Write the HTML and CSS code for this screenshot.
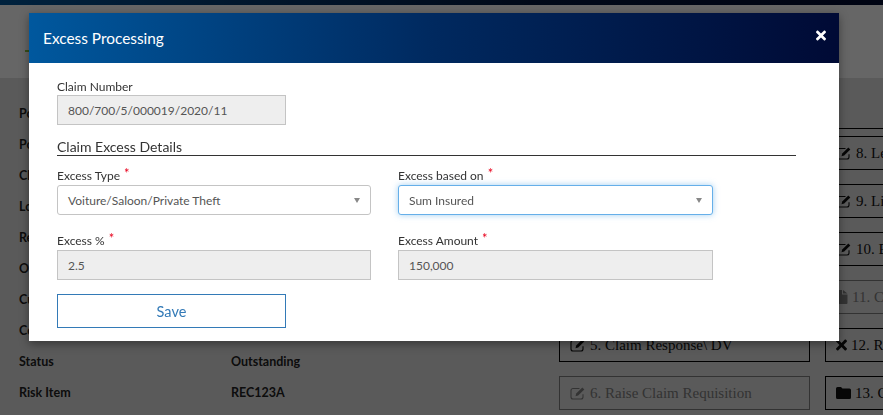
FILE: index.html
```html
<!DOCTYPE html>
<html lang="en">
<head>
<meta charset="utf-8">
<title>Excess Processing</title>
<link rel="stylesheet" href="styles.css">
</head>
<body>
<svg class="defs" width="0" height="0" aria-hidden="true">
  <symbol id="i-edit" viewBox="0 0 16 14">
    <path d="M13 8.200V11a2 2 0 0 1-2 2H3a2 2 0 0 1-2-2V4.500a2 2 0 0 1 2-2h6.500" fill="none" stroke="currentColor" stroke-width="1.100"/>
    <path d="M5.500 10.300l.7-2.700L12.300 1.500l2 2L8.200 9.600z" fill="currentColor"/>
  </symbol>
  <symbol id="i-file" viewBox="0 0 12 14">
    <path d="M0 1a1 1 0 0 1 1-1h5v4.500h5.500V13a1 1 0 0 1-1 1H1a1 1 0 0 1-1-1zM7 0l4.500 3.500H7z" fill="currentColor"/>
  </symbol>
  <symbol id="i-times" viewBox="0 0 352 512">
    <path d="M242.720 256l100.070-100.070c12.280-12.280 12.280-32.190 0-44.480l-22.240-22.240c-12.280-12.280-32.190-12.280-44.480 0L176 189.280 75.930 89.210c-12.280-12.280-32.190-12.280-44.480 0L9.210 111.450c-12.280 12.280-12.280 32.190 0 44.480L109.280 256 9.210 356.070c-12.280 12.280-12.280 32.190 0 44.480l22.240 22.240c12.280 12.280 32.200 12.280 44.480 0L176 322.720l100.070 100.070c12.280 12.280 32.200 12.280 44.480 0l22.240-22.240c12.280-12.280 12.280-32.190 0-44.480L242.720 256z" fill="currentColor"/>
  </symbol>
  <symbol id="i-folder" viewBox="0 0 15 12">
    <path d="M0 1.500A1.500 1.500 0 0 1 1.500 0h3.500l1.500 1.500h7A1.500 1.500 0 0 1 15 3v7.500a1.500 1.500 0 0 1-1.500 1.500h-12A1.500 1.500 0 0 1 0 10.500z" fill="currentColor"/>
  </symbol>
</svg>

<div class="page">
  <div class="topbar"></div>
  <div class="band"><span class="band-mark"></span></div>
  <div class="content">
    <dl class="details">
      <dt>Policy No</dt><dd>800/700/5</dd>
      <dt>Policy Holder</dt><dd>Sample</dd>
      <dt>Claim Number</dt><dd>000019</dd>
      <dt>Loss Date</dt><dd>2020</dd>
      <dt>Reported</dt><dd>2020</dd>
      <dt>Origin</dt><dd>Local</dd>
      <dt>Currency</dt><dd>MUR</dd>
      <dt>Cover</dt><dd>Motor</dd>
      <dt>Status</dt><dd>Outstanding</dd>
      <dt>Risk Item</dt><dd>REC123A</dd>
    </dl>
    <div class="actions">
      <div class="rule"></div>
      <div class="action-grid">
        <a class="action">&nbsp;</a>
        <a class="action"><svg class="ic-edit"><use href="#i-edit"/></svg>8. Letters</a>
        <a class="action">&nbsp;</a>
        <a class="action"><svg class="ic-edit"><use href="#i-edit"/></svg>9. Liability</a>
        <a class="action">&nbsp;</a>
        <a class="action"><svg class="ic-edit"><use href="#i-edit"/></svg>10. Excess</a>
        <a class="action">&nbsp;</a>
        <a class="action off"><svg class="ic-file"><use href="#i-file"/></svg>11. Closure</a>
        <a class="action"><svg class="ic-edit"><use href="#i-edit"/></svg>5. Claim Response\ DV</a>
        <a class="action"><svg class="ic-times"><use href="#i-times"/></svg>12. Reject</a>
        <a class="action off"><svg class="ic-edit"><use href="#i-edit"/></svg>6. Raise Claim Requisition</a>
        <a class="action"><svg class="ic-folder"><use href="#i-folder"/></svg>13. Close</a>
      </div>
    </div>
  </div>
</div>

<div class="backdrop"></div>

<section class="modal">
  <header class="modal-head">
    <h1>Excess Processing</h1>
    <svg class="close"><use href="#i-times"/></svg>
  </header>
  <form class="modal-body">
    <div class="field claim">
      <label>Claim Number</label>
      <div class="control ro">800/700/5/000019/2020/11</div>
    </div>
    <h2 class="section">Claim Excess Details</h2>
    <div class="form-grid">
      <div class="field">
        <label>Excess Type <b>*</b></label>
        <div class="control select">Voiture/Saloon/Private Theft<i class="caret"></i></div>
      </div>
      <div class="field">
        <label>Excess based on <b>*</b></label>
        <div class="control select focus">Sum Insured<i class="caret"></i></div>
      </div>
      <div class="field">
        <label>Excess % <b>*</b></label>
        <div class="control ro">2.5</div>
      </div>
      <div class="field">
        <label>Excess Amount <b>*</b></label>
        <div class="control ro">150,000</div>
      </div>
    </div>
    <button class="save" type="button">Save</button>
  </form>
</section>
</body>
</html>
```

FILE: styles.css
```css
* { box-sizing: border-box; }
html, body { margin: 0; height: 100%; overflow: hidden; }
body { font-family: "Lato", "Open Sans", sans-serif; background: #e2e2e2; color: #333; }
.defs { position: absolute; }

.topbar { height: 5px; background: linear-gradient(90deg, #00569b, #00183f 60%, #000a30); }
.band { height: 73px; background: #fff; position: relative; }
.band-mark { position: absolute; left: 25px; top: 45px; width: 6px; height: 2px; background: #8dc63f; }

.content { display: flex; padding-left: 19px; width: 1100px; }
.details {
  flex: none; width: 540px; margin: 27px 0 0; display: grid;
  grid-template-columns: 212px 1fr; grid-auto-rows: 31px;
  font-size: 12.500px; font-weight: 700; color: #222; line-height: 18px;
}
.details dt, .details dd { margin: 0; }
.actions { flex: none; width: 517px; }
.rule { height: 1px; margin-top: 50px; background: #000; }
.action-grid { margin-top: 7px; display: grid; grid-template-columns: 251px 251px; gap: 14px 15px; }
.action {
  height: 34px; border: 1px solid #000; padding: 0 10px;
  display: flex; align-items: center; gap: 4px; white-space: nowrap;
  font-family: "Liberation Serif", serif; font-size: 15px; color: #111; overflow: hidden;
}
.action.off { color: #808080; border-color: #808080; }
.ic-edit { width: 16px; height: 14px; flex: none; }
.ic-file { width: 12px; height: 14px; flex: none; }
.ic-times { width: 11px; height: 16px; flex: none; }
.ic-folder { width: 15px; height: 12px; flex: none; }

.backdrop { position: fixed; inset: 0; background: rgba(0,0,0,.6); }

.modal { position: absolute; left: 29px; top: 13px; width: 810px; background: #fff; box-shadow: 0 3px 9px rgba(0,0,0,.4); }
.modal-head {
  height: 50px; padding: 0 13px 0 14px; display: flex; align-items: center; justify-content: space-between;
  background: linear-gradient(90deg, #00589e 0%, #00295f 50%, #000a35 100%); color: #fff;
}
.modal-head h1 { margin: 0; font-size: 15.400px; font-weight: 400; }
.close { width: 10px; height: 15px; margin-top: -5px; }

.modal-body { padding: 14px 43px 13px 28px; font-size: 12px; }
.field label { display: block; height: 18px; line-height: 17px; color: #333; }
.claim.field label { line-height: 20px; }
.field label b { color: #e8001c; font-weight: 400; font-size: 13px; margin-left: 1px; position: relative; top: -2px; }
.control {
  height: 30px; border: 1px solid #c4c4c4; padding: 0 10px; display: flex; align-items: center;
  color: #555; background: #fff; position: relative;
}
.ro { background: #eee; }
.select { border-radius: 3px; }
.focus { border-color: #66afe9; box-shadow: 0 0 6px rgba(102,175,233,.6); }
.caret { position: absolute; right: 10px; top: 12px; border: 3.500px solid transparent; border-top: 5px solid #888; border-bottom: 0; }
.claim { width: 229px; }
.section {
  margin: 13px 0 11px; height: 17px; font-size: 14px; font-weight: 400; line-height: 18px;
  border-bottom: 1px solid #333; color: #333; box-sizing: content-box;
}
.form-grid { display: grid; grid-template-columns: 314px 315px; column-gap: 27px; row-gap: 17px; }
.save {
  display: block; width: 229px; height: 34px; margin-top: 14px; background: #fff;
  border: 1px solid #337ab7; color: #337ab7; font: inherit; font-size: 14.500px;
}
```
